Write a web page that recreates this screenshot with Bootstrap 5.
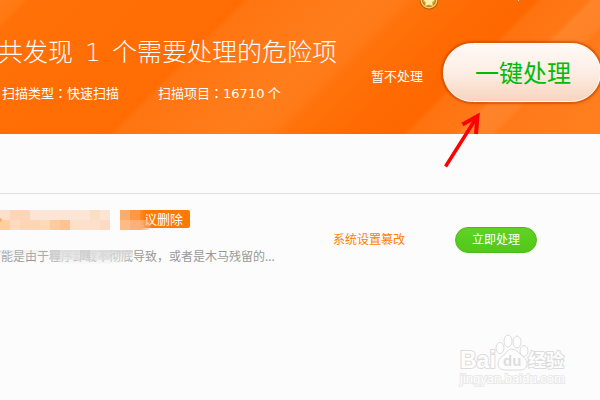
<!DOCTYPE html>
<html lang="zh-CN">
<head>
<meta charset="utf-8">
<meta name="viewport" content="width=device-width, initial-scale=1">
<title>扫描结果</title>
<link href="https://cdn.jsdelivr.net/npm/bootstrap@5.3.0/dist/css/bootstrap.min.css" rel="stylesheet">
<style>
body{font-family:"Noto Sans","Noto Sans CJK SC",sans-serif;background:#fcfcfc;font-size:13px;line-height:20px;min-height:100vh;overflow:hidden}
.banner{min-height:134px;color:#fff;background:linear-gradient(135deg,#ff7c18 0,#ff7912 3%,#ff7108 4%,#ff6c03 33%,#ff7511 34%,#ff7d1c 50%,#ff7a17 55%,#ff730c 57%,#ff6a02 66%,#ff6800 73%,#ff7310 74%,#ff7716 80%,#ff842a 81%,#ff8226 85%,#ff7919 86%,#ff8020 100%)}
.info{padding-top:30px;min-width:0}
.headline{font-size:25px;line-height:42px;font-weight:300;margin:0 0 0 -2px;white-space:nowrap}
.headline b{font-family:"DejaVu Sans","Noto Sans",sans-serif;font-weight:200;margin:0 11px 0 12px}
.facts{margin:9px 0 0 2px;gap:39px;white-space:nowrap}
.num{font-family:"DejaVu Sans",sans-serif}
.colon{font-family:"Noto Sans CJK TC",sans-serif}
.skip,.skip:hover{color:#fff;text-decoration:none}
.skip{margin:66px 20px 0 0}
.fix-all{width:158px;height:59px;margin:43px -1px 0 0;border:1px solid #fff;border-radius:30px;padding:0 0 0 2px;font-size:24px;color:#00bb08;background:linear-gradient(#fff9f6,#fdeee5 50%,#f8d4be);box-shadow:0 0 0 2px rgba(190,70,0,.4),0 0 2px 3px rgba(190,70,0,.2)}
.strip{height:60px;border-bottom:1px solid #e0e0e0}
.coin{left:419px;top:-9px}
.pointer{left:440px;top:110px;pointer-events:none}
.finding{padding-top:16px}
.detail{width:333px}
.flag{margin-left:120px;width:70px;height:18px;line-height:18px;padding-right:7px;background:#ff7800;color:#fff;border-radius:2px;text-align:right;white-space:nowrap;overflow:hidden}
.desc{margin:19px 0 0 -11px;color:#999;font-size:12px;white-space:nowrap}
.kind{color:#ff7e00;font-size:12px;width:122px;margin-top:20px}
.fix-one{width:82px;height:26px;margin-top:17px;padding:0;border:1px solid #4eb818;border-radius:13px;background:linear-gradient(#60d223,#52c81a);color:#fff;font-size:12px;line-height:24px}
.mosaic{left:0;top:16px;pointer-events:none}
.watermark{right:30px;bottom:10px}
</style>
</head>
<body class="position-relative">
<header class="banner d-flex align-items-start">
 <div class="info flex-grow-1">
  <h1 class="headline">共发现<b>1</b>个需要处理的危险项</h1>
  <div class="facts d-flex"><span>扫描类型<span class="colon" lang="zh-TW">：</span>快速扫描</span><span>扫描项目<span class="colon" lang="zh-TW">：</span><span class="num">16710</span> 个</span></div>
 </div>
 <a class="skip flex-shrink-0" href="#">暂不处理</a>
 <button class="fix-all flex-shrink-0" type="button">一键处理</button>
</header>
<svg class="coin position-absolute" width="100" height="20" viewBox="0 0 100 20" aria-hidden="true">
 <circle cx="10" cy="9" r="9.500" fill="#c05a00"/><circle cx="10" cy="9" r="8.500" fill="#f5ce68"/><circle cx="10" cy="9" r="7" fill="#b87a1c"/><circle cx="10" cy="9" r="6" fill="#d9a238"/>
 <path d="M10 4l2 4 4 .5-3 3 .8 3.500-3.800-1.500L6.200 15 7 11.500 4 8.500 8 8z" fill="#fff0a8"/>
 <path d="M100 9v1" stroke="#ffd9b8" stroke-width="2"/>
</svg>
<main>
 <div class="strip"></div>
 <section class="finding d-flex align-items-start position-relative">
  <div class="detail"><div class="flag">建议删除</div><p class="desc">可能是由于程序卸载不彻底导致，或者是木马残留的...</p></div>
  <span class="kind">系统设置篡改</span>
  <button class="fix-one" type="button">立即处理</button>
  <svg class="mosaic position-absolute" width="160" height="54" viewBox="0 0 160 54" aria-hidden="true">
   <defs>
    <linearGradient id="fadeRight"><stop offset="0" stop-color="#ff8a28"/><stop offset="1" stop-color="#ff7800"/></linearGradient>
    <linearGradient id="fadeEdge"><stop offset="0" stop-color="#ffad70"/><stop offset="1" stop-color="#ffad70" stop-opacity="0"/></linearGradient>
    <linearGradient id="fadeDown" x2="0" y2="1"><stop offset="0" stop-color="#d5d5d5" stop-opacity=".9"/><stop offset="1" stop-color="#f3f3f3" stop-opacity=".4"/></linearGradient>
   </defs>
   <g shape-rendering="crispEdges">
    <path fill="#fde5d5" d="M0 0h110v20H0z"/>
    <path fill="#fde0cb" d="M0 0h10v10H0zM70 10h30v10H70z"/>
    <path fill="#fed5b6" d="M10 0h20v10H10z"/>
    <path fill="#fddbc2" d="M10 10h10v10H10zM100 10h10v10h-10z"/>
    <path fill="#fed5b6" d="M20 10h20v10H20z"/>
    <path fill="#ffcf9f" d="M0 10h10v10H0z"/>
    <path fill="#fdd9bc" d="M40 10h10v10H40z"/>
    <path fill="#fccb9f" d="M50 10h10v10H50z"/>
    <path fill="#fdc392" d="M60 10h10v10H60z"/>
    <path fill="#fbdfc2" d="M90 0h10v10H90z"/>
    <path fill="#ffad66" d="M120 0h10v10h-10z"/>
    <path fill="#ff9846" d="M130 0h10v10h-10z"/>
    <path fill="#ffbb85" d="M120 10h10v10h-10z"/>
    <path fill="#ffb076" d="M130 10h10v10h-10z"/>
   </g>
   <circle cx="0" cy="10" r="2" fill="#ffad68"/>
   <path fill="url(#fadeRight)" d="M140 0h6v10h-6z"/>
   <path fill="url(#fadeEdge)" d="M140 10h15l-6 10h-9z"/>
   <path fill="url(#fadeDown)" d="M0 40h45l5 10H0z" opacity=".35"/>
   <path fill="url(#fadeDown)" d="M50 40h83v6l-9 6-14 2H65l-15-4z"/>
   <g fill="#ccc" fill-opacity=".55" shape-rendering="crispEdges"><path d="M50 40h10v10H50zM80 40h10v10H80z"/><path fill="#e4e4e4" d="M60 40h20v10H60zM90 40h10v10H90z"/><path fill="#ddd" fill-opacity=".7" d="M100 40h10v10h-10z"/></g>
  </svg>
 </section>
</main>
<svg class="pointer position-absolute" width="46" height="60" viewBox="0 0 46 60" fill="none" stroke="#f00" aria-hidden="true">
 <path d="M6.500 55L35 10" stroke-width="3.500" stroke-linecap="square"/><path d="M22.500 14.500L37.500 6L36 24" stroke-width="4"/>
</svg>
<svg class="watermark position-absolute" width="112" height="56" viewBox="0 0 112 56" role="img" aria-label="Baidu 经验">
 <g fill="#fdfdfd" stroke="#dcdcdc" stroke-width="1">
  <text x="2" y="34" font-family="Liberation Sans,sans-serif" font-size="23" font-weight="700" stroke-width="2" paint-order="stroke">Bai</text>
  <ellipse cx="42" cy="14" rx="4" ry="5.500"/><ellipse cx="50" cy="7" rx="4" ry="6"/><ellipse cx="59" cy="8" rx="4" ry="6"/><ellipse cx="66" cy="17" rx="4" ry="5.500"/>
  <path d="M54 15c-4 0-5 3-8 6-4 3-6 5-6 9 0 5 4 6 8 6h14c5 0 7-3 7-7s-4-6-7-9c-3-3-4-5-8-5z"/>
  <text x="45" y="32" font-family="Liberation Sans,sans-serif" font-size="15" font-weight="700" fill="#ddd" stroke="none">du</text>
  <text x="70" y="33" font-family="Noto Sans CJK SC,sans-serif" font-size="18" font-weight="700" stroke-width="2" paint-order="stroke">经验</text>
  <text x="2" y="49" font-family="Liberation Sans,sans-serif" font-size="13" stroke="#e9e9e9" stroke-width="2" paint-order="stroke">jingyan.baidu.com</text>
 </g>
</svg>
<script src="https://cdn.jsdelivr.net/npm/bootstrap@5.3.0/dist/js/bootstrap.bundle.min.js"></script>
</body>
</html>
